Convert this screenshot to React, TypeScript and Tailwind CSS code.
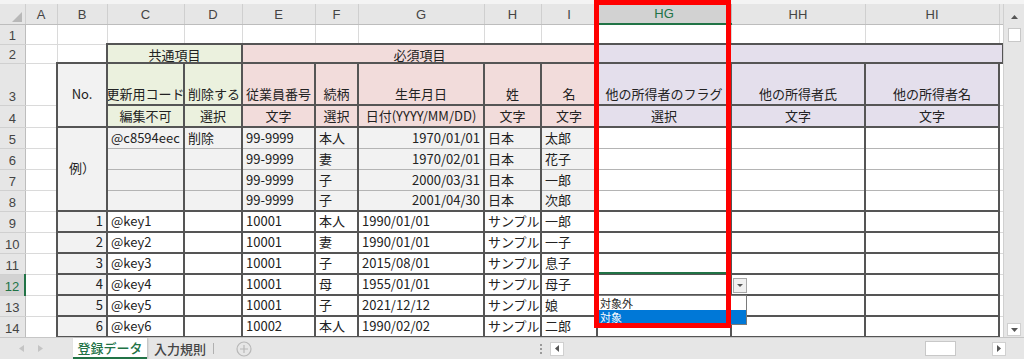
import React from "react";

const font = "font-['Noto_Sans_CJK_JP','Liberation_Sans',sans-serif]";

const cols = [25, 32, 50, 77, 58, 73, 43, 126, 57, 56, 134, 134, 134, 4];
const letters = ["", "A", "B", "C", "D", "E", "F", "G", "H", "I", "HG", "HH", "HI", ""];

const examples = [
  ["@c8594eec", "削除", "99-9999", "本人", "1970/01/01", "日本", "太郎"],
  ["", "", "99-9999", "妻", "1970/02/01", "日本", "花子"],
  ["", "", "99-9999", "子", "2000/03/31", "日本", "一郎"],
  ["", "", "99-9999", "子", "2001/04/30", "日本", "次郎"],
];

const rows = [
  ["1", "@key1", "10001", "本人", "1990/01/01", "サンプル", "一郎"],
  ["2", "@key2", "10001", "妻", "1990/01/01", "サンプル", "一子"],
  ["3", "@key3", "10001", "子", "2015/08/01", "サンプル", "息子"],
  ["4", "@key4", "10001", "母", "1955/01/01", "サンプル", "母子"],
  ["5", "@key5", "10001", "子", "2021/12/12", "サンプル", "娘"],
  ["6", "@key6", "10002", "本人", "1990/02/02", "サンプル", "二郎"],
];

const base = "overflow-hidden whitespace-nowrap px-[3px] pb-[2px] pt-0 align-bottom text-[13px] leading-[16px] text-[#222]";
const thin = "overflow-hidden whitespace-nowrap px-[3px] py-0 align-bottom text-[13px] leading-[15px] text-[#222]";
const wide = "overflow-hidden whitespace-nowrap p-0 pb-[2px] align-bottom text-[13px] leading-[16px] text-[#222]";
const grid = "border-r border-b border-[#dadada]";
const dark = "border-2 border-[#555]";
const exCell = "border-x-2 border-x-[#555] border-y border-y-[#b4b4b4] bg-[#f2f2f2]";
const exWhite = "border-x-2 border-x-[#555] border-y border-y-[#b4b4b4] bg-white";

function RowHead({ n, active }: { n: number; active?: boolean }) {
  return (
    <td
      className={
        "p-0 align-bottom text-center text-[13px] leading-[16px] font-['Liberation_Sans',sans-serif] border-b border-b-[#d0d0d0] " +
        (active
          ? "bg-[#d2d2d2] text-[#217346] border-r-2 border-r-[#217346]"
          : "bg-[#e6e6e6] text-[#444] border-r border-r-[#bdbdbd]")
      }
    >
      {n}
    </td>
  );
}

function Center({ children }: { children: React.ReactNode }) {
  return <div className="flex justify-center whitespace-nowrap">{children}</div>;
}

function Sheet() {
  return (
    <table className={"table-fixed border-collapse w-[1003px] " + font}>
      <colgroup>
        {cols.map((w, i) => (
          <col key={i} style={{ width: w }} />
        ))}
      </colgroup>
      <tbody>
        {/* column letters */}
        <tr className="h-[20px]">
          {letters.map((l, i) => (
            <td
              key={i}
              className={
                "p-0 pb-[1px] text-center align-bottom text-[13px] leading-[16px] font-['Liberation_Sans',sans-serif] " +
                (l === "HG"
                  ? "bg-[#d2d2d2] text-[#217346] border-b-2 border-b-[#217346] border-r border-r-[#bdbdbd]"
                  : "bg-[#e6e6e6] text-[#444] border-b border-b-[#bdbdbd] border-r border-r-[#cfcfcf]")
              }
            >
              {i === 0 ? (
                <div className="flex h-[18px] items-end justify-end pr-[3px] pb-[1px]">
                  <svg width="10" height="10" viewBox="0 0 10 10">
                    <path d="M10 0 L10 10 L0 10 Z" fill="#b8b8b8" />
                  </svg>
                </div>
              ) : (
                l
              )}
            </td>
          ))}
        </tr>
        {/* row 1 */}
        <tr className="h-[20px]">
          <RowHead n={1} />
          {cols.slice(1).map((_, i) => (
            <td key={i} className={base + " " + grid} />
          ))}
        </tr>
        {/* row 2 */}
        <tr className="h-[19px]">
          <RowHead n={2} />
          <td className={thin + " " + grid} />
          <td className={thin + " " + grid} />
          <td colSpan={2} className={thin + " text-center bg-[#ebf1de] " + dark}>
            共通項目
          </td>
          <td colSpan={5} className={thin + " text-center bg-[#f2dcdb] " + dark}>
            必須項目
          </td>
          <td colSpan={4} className={thin + " bg-[#e4dfec] " + dark} />
        </tr>
        {/* row 3 */}
        <tr className="h-[42px]">
          <RowHead n={3} />
          <td className={base + " " + grid} />
          <td rowSpan={2} className={base + " align-middle text-center bg-[#f2f2f2] " + dark}>
            No.
          </td>
          <td className={wide + " bg-[#ebf1de] " + dark}>
            <Center>更新用コード</Center>
          </td>
          <td className={base + " text-center bg-[#ebf1de] " + dark}>削除する</td>
          <td className={base + " text-center bg-[#f2dcdb] " + dark}>従業員番号</td>
          <td className={base + " text-center bg-[#f2dcdb] " + dark}>続柄</td>
          <td className={base + " text-center bg-[#f2dcdb] " + dark}>生年月日</td>
          <td className={base + " text-center bg-[#f2dcdb] " + dark}>姓</td>
          <td className={base + " text-center bg-[#f2dcdb] " + dark}>名</td>
          <td className={base + " text-center bg-[#e4dfec] " + dark}>他の所得者のフラグ</td>
          <td className={base + " text-center bg-[#e4dfec] " + dark}>他の所得者氏</td>
          <td className={base + " text-center bg-[#e4dfec] " + dark}>他の所得者名</td>
          <td className={base + " " + grid} />
        </tr>
        {/* row 4 */}
        <tr className="h-[22px]">
          <RowHead n={4} />
          <td className={base + " " + grid} />
          <td className={base + " text-center bg-[#ebf1de] " + dark}>編集不可</td>
          <td className={base + " text-center bg-[#ebf1de] " + dark}>選択</td>
          <td className={base + " text-center bg-[#f2dcdb] " + dark}>文字</td>
          <td className={base + " text-center bg-[#f2dcdb] " + dark}>選択</td>
          <td className={wide + " bg-[#f2dcdb] " + dark}>
            <Center>日付(YYYY/MM/DD)</Center>
          </td>
          <td className={base + " text-center bg-[#f2dcdb] " + dark}>文字</td>
          <td className={base + " text-center bg-[#f2dcdb] " + dark}>文字</td>
          <td className={base + " text-center bg-[#e4dfec] " + dark}>選択</td>
          <td className={base + " text-center bg-[#e4dfec] " + dark}>文字</td>
          <td className={base + " text-center bg-[#e4dfec] " + dark}>文字</td>
          <td className={base + " " + grid} />
        </tr>
        {/* example rows 5-8 */}
        {examples.map((r, i) => (
          <tr key={"e" + i} className="h-[21px]">
            <RowHead n={5 + i} />
            <td className={base + " " + grid} />
            {i === 0 && (
              <td rowSpan={4} className={base + " align-middle text-center bg-[#f2f2f2] " + dark}>
                例）
              </td>
            )}
            <td className={base + " " + exCell}>{r[0]}</td>
            <td className={base + " " + exCell}>{r[1]}</td>
            <td className={base + " " + exCell}>{r[2]}</td>
            <td className={base + " " + exCell}>{r[3]}</td>
            <td className={base + " text-right " + exCell}>{r[4]}</td>
            <td className={base + " " + exCell}>{r[5]}</td>
            <td className={base + " " + exCell}>{r[6]}</td>
            <td className={base + " " + exWhite} />
            <td className={base + " " + exWhite} />
            <td className={base + " " + exWhite} />
            <td className={base + " " + grid} />
          </tr>
        ))}
        {/* data rows 9-14 */}
        {rows.map((r, i) => (
          <tr key={"d" + i} className="h-[21px]">
            <RowHead n={9 + i} active={i === 3} />
            <td className={base + " " + grid} />
            <td className={base + " text-right bg-[#f2f2f2] " + dark}>{r[0]}</td>
            <td className={base + " bg-white " + dark}>{r[1]}</td>
            <td className={base + " bg-white " + dark} />
            <td className={base + " bg-white " + dark}>{r[2]}</td>
            <td className={base + " bg-white " + dark}>{r[3]}</td>
            <td className={base + " bg-white " + dark}>{r[4]}</td>
            <td className={base + " bg-white " + dark}>{r[5]}</td>
            <td className={base + " bg-white " + dark}>{r[6]}</td>
            <td className={base + " bg-white " + dark} />
            <td className={base + " bg-white " + dark} />
            <td className={base + " bg-white " + dark} />
            <td className={base + " " + grid} />
          </tr>
        ))}
      </tbody>
    </table>
  );
}

function VScroll() {
  return (
    <div className="flex w-[21px] flex-col items-center bg-[#e6e6e6] pt-[6px] border-l border-[#d0d0d0]">
      <div className="flex h-[14px] w-[14px] items-center justify-center">
        <svg width="7" height="4" viewBox="0 0 7 4">
          <path d="M0 4 L3.5 0 L7 4 Z" fill="#555" />
        </svg>
      </div>
      <div className="mt-[4px] h-[14px] w-[13px] border border-[#c8c8c8] bg-white" />
      <div className="flex-1" />
      <div className="mb-[1px] flex h-[13px] w-[14px] items-center justify-center bg-white border border-[#d0d0d0]">
        <svg width="7" height="4" viewBox="0 0 7 4">
          <path d="M0 0 L7 0 L3.5 4 Z" fill="#555" />
        </svg>
      </div>
    </div>
  );
}

function BottomBar() {
  return (
    <div className={"flex h-[22px] items-stretch bg-[#e6e6e6] border-t border-[#c6c6c6] " + font}>
      <div className="flex w-[73px] items-center gap-[14px] pl-[19px]">
        <svg width="5" height="7" viewBox="0 0 5 7">
          <path d="M5 0 L5 7 L0 3.5 Z" fill="#c4c4c4" />
        </svg>
        <svg width="5" height="7" viewBox="0 0 5 7">
          <path d="M0 0 L5 3.5 L0 7 Z" fill="#c4c4c4" />
        </svg>
      </div>
      <div className="flex w-[74px] items-center justify-center bg-white border-b-2 border-[#217346] text-[13px] font-medium text-[#217346] leading-none shadow-[1px_0_2px_rgba(0,0,0,0.2)]">
        登録データ
      </div>
      <div className="flex w-[66px] items-center justify-center text-[13px] font-medium text-[#444] leading-none">
        入力規則
      </div>
      <div className="my-[5px] w-px bg-[#b0b0b0]" />
      <div className="flex w-[60px] items-center justify-center">
        <svg width="16" height="16" viewBox="0 0 16 16">
          <circle cx="8" cy="8" r="7" fill="none" stroke="#b8b8b8" strokeWidth="1.2" />
          <path d="M8 4 V12 M4 8 H12" stroke="#b8b8b8" strokeWidth="1.2" />
        </svg>
      </div>
      <div className="w-[258px]" />
      <div className="flex w-[18px] flex-col items-center justify-center gap-[2px]">
        <div className="h-[2px] w-[2px] bg-[#9a9a9a]" />
        <div className="h-[2px] w-[2px] bg-[#9a9a9a]" />
        <div className="h-[2px] w-[2px] bg-[#9a9a9a]" />
      </div>
      <div className="flex flex-1 items-center">
        <div className="flex h-[14px] w-[14px] items-center justify-center bg-white border border-[#d0d0d0]">
          <svg width="4" height="7" viewBox="0 0 4 7">
            <path d="M4 0 L4 7 L0 3.5 Z" fill="#555" />
          </svg>
        </div>
        <div className="flex-1" />
        <div className="h-[15px] w-[31px] border border-[#c8c8c8] bg-white" />
        <div className="w-[36px]" />
        <div className="flex h-[14px] w-[14px] items-center justify-center bg-white border border-[#d0d0d0]">
          <svg width="4" height="7" viewBox="0 0 4 7">
            <path d="M0 0 L4 3.5 L0 7 Z" fill="#555" />
          </svg>
        </div>
        <div className="w-[18px]" />
      </div>
    </div>
  );
}

export default function App() {
  return (
    <div className="relative h-[359px] w-[1024px] overflow-hidden bg-white">
      <div className="flex h-[337px] flex-col">
        <div className="flex flex-1 overflow-hidden pt-[4px] bg-[#f4f4f4]">
          <div className="w-[1003px] overflow-hidden bg-white">
            <Sheet />
          </div>
          <VScroll />
        </div>
      </div>
      <BottomBar />

      {/* selected cell top edge */}
      <div className="absolute left-[597px] top-[272px] h-[2px] w-[134px] bg-[#217346]" />
      {/* dropdown button */}
      <div className="absolute left-[733px] top-[278px] flex h-[15px] w-[14px] items-center justify-center bg-[#f0f0f0] border border-[#a8a8a8]">
        <svg width="6" height="3" viewBox="0 0 6 3">
          <path d="M0 0 L6 0 L3 3 Z" fill="#555" />
        </svg>
      </div>
      {/* dropdown list */}
      <div className={"absolute left-[597px] top-[295px] flex h-[30px] w-[150px] flex-col bg-white border border-[#7a7a7a] " + font}>
        <div className="flex h-[14px] items-center pl-[2px] text-[11px] text-[#222]">対象外</div>
        <div className="flex h-[14px] items-center bg-[#0078d7] pl-[2px] text-[11px] text-white">対象</div>
      </div>
      {/* red highlight */}
      <div className="absolute left-[594px] top-0 h-[328px] w-[137px] border-[5px] border-[#ff0000]" />
    </div>
  );
}
